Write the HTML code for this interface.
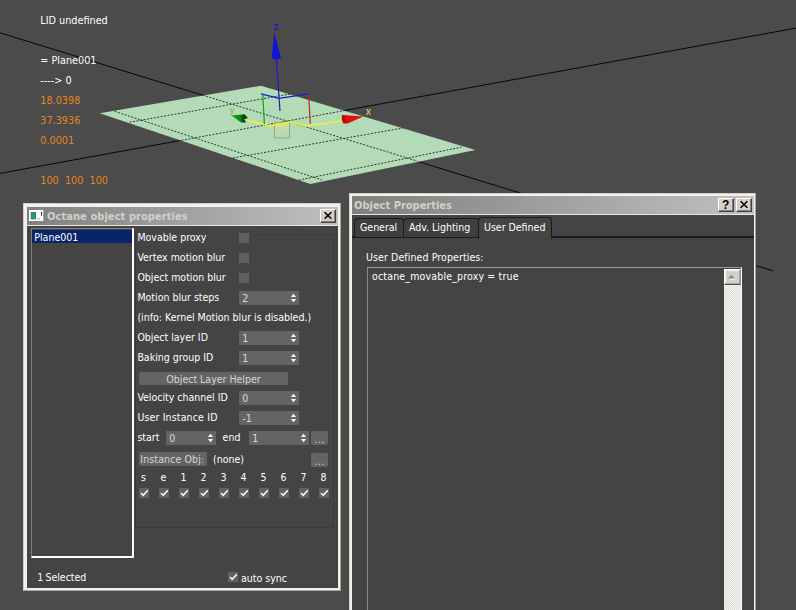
<!DOCTYPE html>
<html><head><meta charset="utf-8">
<style>
html,body{margin:0;padding:0;}
body{width:796px;height:610px;overflow:hidden;background:#4b4b4b;position:relative;font-family:"DejaVu Sans Condensed","Liberation Sans",sans-serif;font-size:10.5px;color:#fff;line-height:13px;}
.a{position:absolute;white-space:pre;}
#vp{position:absolute;left:0;top:0;}
.vt{color:#fff;font-size:10.75px;}
.vo{color:#e8851f;font-size:10.75px;}
.win{position:absolute;background:#444;box-sizing:border-box;}
.tb{position:absolute;height:18px;background:linear-gradient(90deg,#808080,#c0c0c0);}
.tt{position:absolute;font-weight:bold;color:#d4d0c8;font-size:11px;top:2px;white-space:pre;}
.cb{position:absolute;width:16px;height:14px;background:#d4d0c8;box-sizing:border-box;border:1px solid;border-color:#fff #404040 #404040 #fff;box-shadow:inset -1px -1px 0 #808080;}
.chk{position:absolute;width:10px;height:10px;background:#616161;}
.spn{position:absolute;height:14px;background:#646464;border-radius:1px;color:#dcdcdc;}
.spn span{position:absolute;left:3.3px;top:1px;}
.spn i{position:absolute;right:3px;top:3px;width:5px;height:8px;}
.ar{position:absolute;right:2px;top:2px;}
.ck{position:absolute;left:0;top:0;}
.tab{box-sizing:border-box;border:1.5px solid #1b1b1b;border-bottom:none;border-radius:4px 4px 0 0;background:#3f3f42}
.btn{position:absolute;background:#646464;border-radius:2px;color:#d4d4d4;text-align:center;overflow:hidden;}
</style></head><body>
<svg id="vp" width="796" height="610" viewBox="0 0 796 610">
<g stroke="#080808" stroke-width="1" fill="none">
<line x1="0" y1="32.8" x2="773" y2="270.9"/>
<line x1="0" y1="173.4" x2="796" y2="28.1"/>
</g>
<polygon points="99.7,113.3 261,85.7 475.4,150 310.3,184" fill="#b3dbb7"/>
<g stroke="#1c241c" stroke-width="0.9" fill="none" stroke-dasharray="2 1.5">
<line x1="202.6" y1="95.2" x2="417.4" y2="161.1"/>
<line x1="181.5" y1="140.3" x2="345.3" y2="110.4"/>
<line x1="114.6" y1="111.3" x2="322" y2="180"/>
<line x1="129.6" y1="122.2" x2="290" y2="94"/>
<line x1="233" y1="158" x2="403" y2="128"/>
<line x1="298.8" y1="180.1" x2="461.4" y2="147.2"/>
</g>
<!-- gizmo -->
<defs><linearGradient id="sq" x1="0" y1="0" x2="0" y2="1"><stop offset="0" stop-color="#e6e66a" stop-opacity="0.75"/><stop offset="0.6" stop-color="#d8e090" stop-opacity="0.15"/><stop offset="1" stop-color="#d8e090" stop-opacity="0"/></linearGradient>
<linearGradient id="gc" x1="0" y1="0" x2="1" y2="0"><stop offset="0" stop-color="#14a814"/><stop offset="0.55" stop-color="#0c8a0c"/><stop offset="0.7" stop-color="#064806"/><stop offset="1" stop-color="#053c05"/></linearGradient>
<linearGradient id="rc" x1="0" y1="0" x2="1" y2="0"><stop offset="0" stop-color="#a80000"/><stop offset="0.2" stop-color="#dc0a0a"/><stop offset="1" stop-color="#e81414"/></linearGradient></defs>
<rect x="274.5" y="122.5" width="15" height="15.5" fill="url(#sq)" stroke="#9c9c98" stroke-width="1"/>
<g fill="none" stroke-width="1.2">
<polyline points="246.7,120 270.8,126 290,121.8 305,126 342,121" stroke="#f2f22a" stroke-width="1.6"/>
<polyline points="261,93.8 279,98.4 308.7,93.8" stroke="#1a1ac8"/>
<line x1="280" y1="111" x2="276.3" y2="58" stroke="#1a1ac8"/>
<line x1="262.8" y1="95" x2="264.4" y2="124" stroke="#14a014"/>
<line x1="308.7" y1="95" x2="310.3" y2="124" stroke="#d02020"/>
</g>
<polygon points="274.3,32.6 271.8,57.5 273,59 280,59 280.8,57" fill="#1212d8"/>
<polygon points="363.5,116.6 341.9,115.1 341.9,120 343.4,123.6 347.5,123.6" fill="url(#rc)"/>
<polygon points="231.3,115.6 244.6,114.3 247.9,118.1 244.2,119.2 246.1,122.4 241.1,122.4" fill="url(#gc)"/>
<text x="273.6" y="30" font-size="10" font-weight="bold" fill="#1c1cd0" font-family="Liberation Sans,sans-serif">z</text>
<text x="365.8" y="115.3" font-size="10.5" fill="#e6de5a" font-family="Liberation Sans,sans-serif">x</text>
<text x="230" y="113" font-size="9" fill="#a8a030" font-family="Liberation Sans,sans-serif">y</text>
</svg>

<div class="a vt" style="left:40.3px;top:14px">LID undefined</div>
<div class="a vt" style="left:40.3px;top:54px">= Plane001</div>
<div class="a vt" style="left:40.3px;top:74px">----&gt; 0</div>
<div class="a vo" style="left:40.3px;top:94px">18.0398</div>
<div class="a vo" style="left:40.3px;top:114px">37.3936</div>
<div class="a vo" style="left:40.3px;top:134px">0.0001</div>
<div class="a vo" style="left:40.3px;top:174px">100  100  100</div>

<!-- Octane window -->
<div class="win" id="w1" style="left:23px;top:203px;width:318px;height:388px;border:1px solid;border-color:#d4d0c8 #a8a6a0 #a8a6a0 #d4d0c8;box-shadow:inset 3px 3px 0 #f3f1ec,inset -2px -2px 0 #f3f1ec;">
</div>
<div class="tb" style="left:27px;top:207px;width:311px"></div>
<div class="a" style="left:27px;top:225px;width:311px;height:1px;background:#e8e8e8"></div>
<svg class="a" style="left:29px;top:210px" width="15" height="11" viewBox="0 0 15 11"><rect x="0" y="0" width="14.3" height="11" fill="#fdfdfd"/><rect x="1.7" y="2" width="5.3" height="7.4" fill="#2f8f7e"/><rect x="8.2" y="8.3" width="3" height="1.1" fill="#b0b0b0"/><rect x="12" y="1.9" width="1" height="2.6" fill="#222"/><rect x="12" y="5" width="1" height="0.9" fill="#444"/></svg>
<div class="tt" style="left:47px;top:209.6px;letter-spacing:0.07px">Octane object properties</div>
<div class="cb" style="left:320px;top:209px"><svg width="14" height="12" viewBox="0 0 14 12" style="position:absolute;left:0;top:0"><path d="M3.6 2.2 L10.4 8.8 M10.4 2.2 L3.6 8.8" stroke="#000" stroke-width="1.55" fill="none"/></svg></div>

<!-- listbox -->
<div class="a" style="left:31px;top:228px;width:103px;height:330px;box-sizing:border-box;border-style:solid;border-width:1px 2px 2px 1px;border-color:#808080 #fff #fff #808080;background:#444"></div>
<div class="a" style="left:32px;top:230px;width:100px;height:13px;background:#0a246a"></div>
<div class="a" style="left:34.3px;top:231px">Plane001</div>

<!-- groupbox -->
<div class="a" style="left:135px;top:234px;width:199px;height:294px;box-sizing:border-box;border:1px solid #3b3b3b;border-top:none"></div><div class="a" style="left:254px;top:234px;width:80px;height:1px;background:#3b3b3b"></div>

<div class="a" style="left:137.4px;top:231px">Movable proxy</div>
<div class="a" style="left:137.4px;top:251px">Vertex motion blur</div>
<div class="a" style="left:137.4px;top:271px">Object motion blur</div>
<div class="a" style="left:137.4px;top:291px">Motion blur steps</div>
<div class="a" style="left:137.4px;top:311px">(info: Kernel Motion blur is disabled.)</div>
<div class="a" style="left:137.4px;top:331px">Object layer ID</div>
<div class="a" style="left:137.4px;top:351px">Baking group ID</div>
<div class="a" style="left:137.4px;top:391px">Velocity channel ID</div>
<div class="a" style="left:137.4px;top:411px;letter-spacing:0.15px">User Instance ID</div>
<div class="a" style="left:137.4px;top:431px">start</div>
<div class="a" style="left:222.6px;top:431px">end</div>
<div class="a" style="left:213px;top:453px">(none)</div>

<div class="chk" style="left:239px;top:233px"></div>
<div class="chk" style="left:239px;top:253px"></div>
<div class="chk" style="left:239px;top:273px"></div>

<div class="spn" style="left:239px;top:291px;width:60px"><span>2</span><svg class="ar" width="7" height="10" viewBox="0 0 7 10"><polygon points="1,4 6,4 3.5,0.8" fill="#fff"/><polygon points="1,6 6,6 3.5,9.2" fill="#fff"/></svg></div>
<div class="spn" style="left:239px;top:331px;width:60px"><span>1</span><svg class="ar" width="7" height="10" viewBox="0 0 7 10"><polygon points="1,4 6,4 3.5,0.8" fill="#fff"/><polygon points="1,6 6,6 3.5,9.2" fill="#fff"/></svg></div>
<div class="spn" style="left:239px;top:351px;width:60px"><span>1</span><svg class="ar" width="7" height="10" viewBox="0 0 7 10"><polygon points="1,4 6,4 3.5,0.8" fill="#fff"/><polygon points="1,6 6,6 3.5,9.2" fill="#fff"/></svg></div>
<div class="spn" style="left:239px;top:391px;width:60px"><span>0</span><svg class="ar" width="7" height="10" viewBox="0 0 7 10"><polygon points="1,4 6,4 3.5,0.8" fill="#fff"/><polygon points="1,6 6,6 3.5,9.2" fill="#fff"/></svg></div>
<div class="spn" style="left:239px;top:411px;width:60px"><span>-1</span><svg class="ar" width="7" height="10" viewBox="0 0 7 10"><polygon points="1,4 6,4 3.5,0.8" fill="#fff"/><polygon points="1,6 6,6 3.5,9.2" fill="#fff"/></svg></div>
<div class="spn" style="left:166px;top:431px;width:50px"><span>0</span><svg class="ar" width="7" height="10" viewBox="0 0 7 10"><polygon points="1,4 6,4 3.5,0.8" fill="#fff"/><polygon points="1,6 6,6 3.5,9.2" fill="#fff"/></svg></div>
<div class="spn" style="left:249px;top:431px;width:60px"><span>1</span><svg class="ar" width="7" height="10" viewBox="0 0 7 10"><polygon points="1,4 6,4 3.5,0.8" fill="#fff"/><polygon points="1,6 6,6 3.5,9.2" fill="#fff"/></svg></div>

<div class="btn" style="left:139px;top:372px;width:149px;height:13px;line-height:14.5px">Object Layer Helper</div>
<div class="btn" style="left:139px;top:452px;width:68px;height:14px;line-height:15.5px;text-align:left;text-indent:1.3px;letter-spacing:0.12px">Instance Obj:</div>
<div class="btn" style="left:311px;top:431px;width:17px;height:14px;line-height:16px;color:#d2d2d2;letter-spacing:0.4px;text-indent:0.4px">...</div>
<div class="btn" style="left:311px;top:453px;width:17px;height:14px;line-height:16px;color:#d2d2d2;letter-spacing:0.4px;text-indent:0.4px">...</div>

<div class="a" style="left:140px;top:471px;width:7px;text-align:center">s</div>
<div class="a" style="left:160px;top:471px;width:7px;text-align:center">e</div>
<div class="a" style="left:180px;top:471px;width:7px;text-align:center">1</div>
<div class="a" style="left:200px;top:471px;width:7px;text-align:center">2</div>
<div class="a" style="left:220px;top:471px;width:7px;text-align:center">3</div>
<div class="a" style="left:240px;top:471px;width:7px;text-align:center">4</div>
<div class="a" style="left:260px;top:471px;width:7px;text-align:center">5</div>
<div class="a" style="left:280px;top:471px;width:7px;text-align:center">6</div>
<div class="a" style="left:300px;top:471px;width:7px;text-align:center">7</div>
<div class="a" style="left:320px;top:471px;width:7px;text-align:center">8</div>
<div class="chk" style="left:139px;top:488px"><svg class="ck" width="10" height="10" viewBox="0 0 10 10"><path d="M2 5 L4.2 7.4 L8.8 2.4" stroke="#f2f2f2" stroke-width="1.6" fill="none"/></svg></div>
<div class="chk" style="left:159px;top:488px"><svg class="ck" width="10" height="10" viewBox="0 0 10 10"><path d="M2 5 L4.2 7.4 L8.8 2.4" stroke="#f2f2f2" stroke-width="1.6" fill="none"/></svg></div>
<div class="chk" style="left:179px;top:488px"><svg class="ck" width="10" height="10" viewBox="0 0 10 10"><path d="M2 5 L4.2 7.4 L8.8 2.4" stroke="#f2f2f2" stroke-width="1.6" fill="none"/></svg></div>
<div class="chk" style="left:199px;top:488px"><svg class="ck" width="10" height="10" viewBox="0 0 10 10"><path d="M2 5 L4.2 7.4 L8.8 2.4" stroke="#f2f2f2" stroke-width="1.6" fill="none"/></svg></div>
<div class="chk" style="left:219px;top:488px"><svg class="ck" width="10" height="10" viewBox="0 0 10 10"><path d="M2 5 L4.2 7.4 L8.8 2.4" stroke="#f2f2f2" stroke-width="1.6" fill="none"/></svg></div>
<div class="chk" style="left:239px;top:488px"><svg class="ck" width="10" height="10" viewBox="0 0 10 10"><path d="M2 5 L4.2 7.4 L8.8 2.4" stroke="#f2f2f2" stroke-width="1.6" fill="none"/></svg></div>
<div class="chk" style="left:259px;top:488px"><svg class="ck" width="10" height="10" viewBox="0 0 10 10"><path d="M2 5 L4.2 7.4 L8.8 2.4" stroke="#f2f2f2" stroke-width="1.6" fill="none"/></svg></div>
<div class="chk" style="left:279px;top:488px"><svg class="ck" width="10" height="10" viewBox="0 0 10 10"><path d="M2 5 L4.2 7.4 L8.8 2.4" stroke="#f2f2f2" stroke-width="1.6" fill="none"/></svg></div>
<div class="chk" style="left:299px;top:488px"><svg class="ck" width="10" height="10" viewBox="0 0 10 10"><path d="M2 5 L4.2 7.4 L8.8 2.4" stroke="#f2f2f2" stroke-width="1.6" fill="none"/></svg></div>
<div class="chk" style="left:319px;top:488px"><svg class="ck" width="10" height="10" viewBox="0 0 10 10"><path d="M2 5 L4.2 7.4 L8.8 2.4" stroke="#f2f2f2" stroke-width="1.6" fill="none"/></svg></div>


<div class="a" style="left:37.2px;top:571px;word-spacing:-0.8px">1 Selected</div>
<div class="chk" style="left:228px;top:572px"><svg class="ck" width="10" height="10" viewBox="0 0 10 10"><path d="M2 5 L4.2 7.4 L8.8 2.4" stroke="#f2f2f2" stroke-width="1.6" fill="none"/></svg></div>
<div class="a" style="left:241px;top:572px">auto sync</div>

<!-- Object Properties window -->
<div class="win" id="w2" style="left:349px;top:193px;width:407px;height:430px;border:1px solid;border-color:#d4d0c8 #a8a6a0 #a8a6a0 #d4d0c8;box-shadow:inset 2px 2px 0 #f3f1ec,inset -1px -1px 0 #f3f1ec;"></div>
<div class="tb" style="left:352px;top:196px;width:402px"></div>
<div class="a" style="left:352px;top:214px;width:402px;height:1px;background:#e8e8e8"></div>
<div class="tt" style="left:354px;top:198.6px">Object Properties</div>
<div class="cb" style="left:718px;top:198px"><span style="position:absolute;left:3px;top:-1px;color:#000;font:bold 12px 'Liberation Sans',sans-serif">?</span></div>
<div class="cb" style="left:736px;top:198px"><svg width="14" height="12" viewBox="0 0 14 12" style="position:absolute;left:0;top:0"><path d="M3.6 2.2 L10.4 8.8 M10.4 2.2 L3.6 8.8" stroke="#000" stroke-width="1.55" fill="none"/></svg></div>

<!-- tabs -->
<div class="a" style="left:352px;top:236px;width:402px;height:2px;background:#1b1b1b"></div>
<div class="a tab" style="left:353.5px;top:218px;width:50px;height:19px"></div>
<div class="a tab" style="left:402.5px;top:218px;width:76px;height:19px"></div>
<div class="a tab" style="left:477.5px;top:216.5px;width:74.5px;height:22px;background:#444;border-width:1.5px 1.5px 0 1.5px"></div>
<div class="a" style="left:360px;top:221px">General</div>
<div class="a" style="left:409px;top:221px">Adv. Lighting</div>
<div class="a" style="left:484px;top:220.6px">User Defined</div>

<div class="a" style="left:366px;top:251px;letter-spacing:0.1px">User Defined Properties:</div>
<div class="a" style="left:367px;top:267px;width:375px;height:360px;box-sizing:border-box;border:1px solid;border-color:#9a9a9a #fff #fff #8a8a8a;background:#444"></div>
<div class="a" style="left:372px;top:270px;letter-spacing:0.17px">octane_movable_proxy = true</div>
<!-- scrollbar -->
<div class="a" style="left:724px;top:269px;width:17px;height:360px;background:repeating-conic-gradient(#f7f6f3 0% 25%, #dfdcd6 0% 50%) 0 0/2px 2px"></div>
<div class="a" style="left:724px;top:269px;width:17px;height:16px;box-sizing:border-box;background:#d4d0c8;border:1px solid;border-color:#fff #8a8a8a #505050 #fff;box-shadow:inset -1px -1px 0 #a8a8a8, inset 1px 1px 0 #f4f4f0"><svg width="15" height="14" style="position:absolute;left:0;top:0"><polygon points="7.5,6 4,9.5 11,9.5" fill="#fff"/><polygon points="6.5,5 3,8.5 10,8.5" fill="#808080"/></svg></div>
</body></html>
